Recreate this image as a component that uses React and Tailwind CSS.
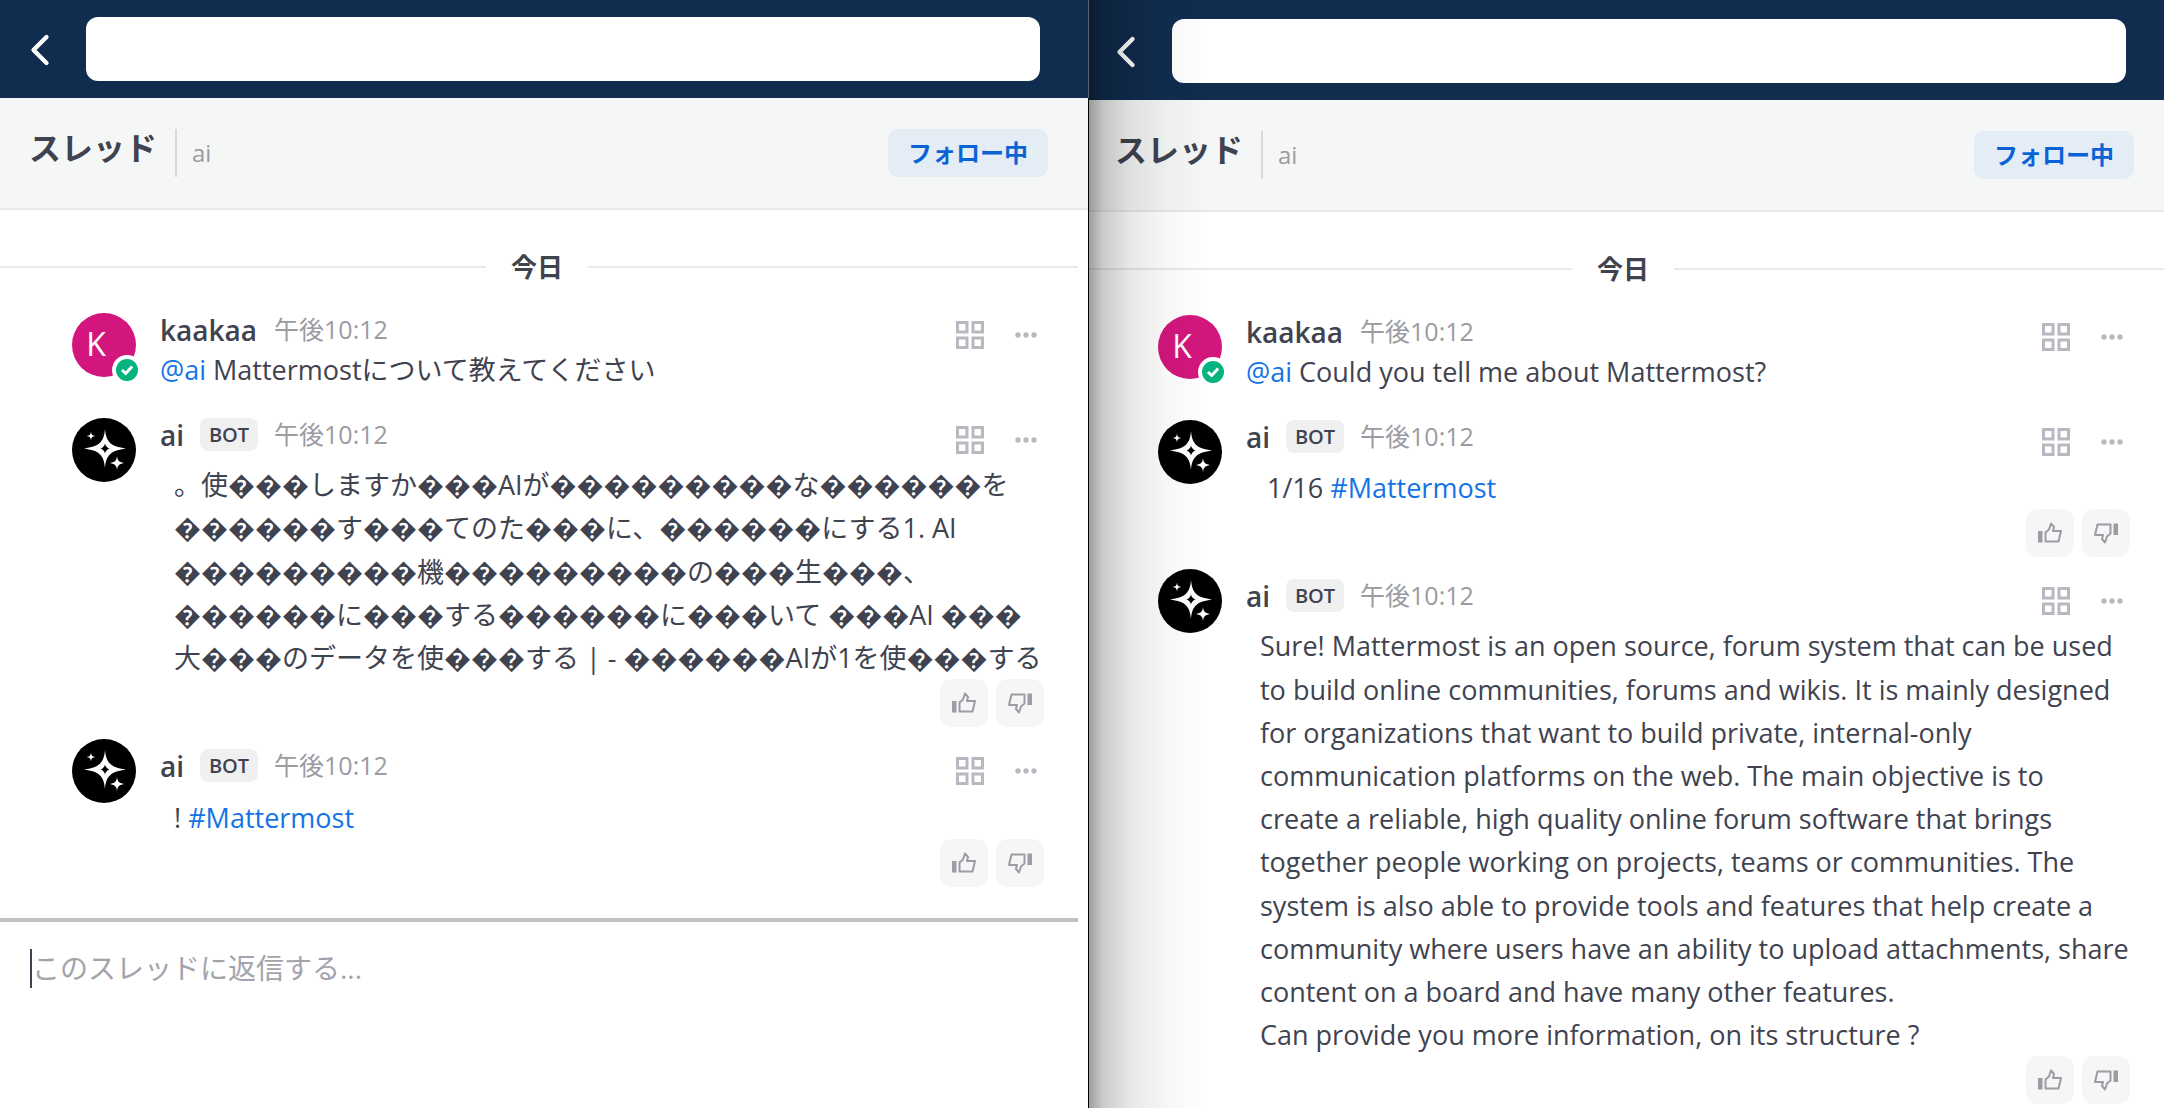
import React from "react";
import { ChevronLeft } from "lucide-react";

const textFont = "font-['Open_Sans','Noto_Sans_CJK_JP',sans-serif]";

const GridIcon = () => (
  <svg width="28" height="28" viewBox="0 0 28 28" fill="none" stroke="#b8b9c0" strokeWidth="3">
    <rect x="1.5" y="1.5" width="9.5" height="9.5" />
    <rect x="17" y="1.5" width="9.5" height="9.5" />
    <rect x="1.5" y="17" width="9.5" height="9.5" />
    <rect x="17" y="17" width="9.5" height="9.5" />
  </svg>
);

const DotsIcon = () => (
  <svg width="22" height="6" viewBox="0 0 22 6" fill="#b8b9c0">
    <circle cx="3" cy="3" r="2.7" />
    <circle cx="11" cy="3" r="2.7" />
    <circle cx="19" cy="3" r="2.7" />
  </svg>
);

const ThumbIcon = ({ down }) => (
  <svg width="24" height="24" viewBox="0 0 24 24" fill="none" className={down ? "rotate-180" : ""}>
    <rect x="0" y="10" width="4.5" height="11.5" fill="#9b9ca4" />
    <path d="M7.5 11.5 L11 8.5 L13 2.5 L16 6 L15 10 H23 L20.5 20.5 H7.5 Z" stroke="#9b9ca4" strokeWidth="2" strokeLinejoin="round" />
  </svg>
);

const Reactions = ({ className }) => (
  <div className={`flex justify-end gap-2 pr-[44px] ${className || ""}`}>
    <div className="w-12 h-12 rounded-xl bg-[#f5f7f7] flex items-center justify-center">
      <ThumbIcon />
    </div>
    <div className="w-12 h-12 rounded-xl bg-[#f5f7f7] flex items-center justify-center">
      <ThumbIcon down />
    </div>
  </div>
);

const BotAvatar = () => (
  <svg width="64" height="64" viewBox="0 0 64 64" className="shrink-0">
    <circle cx="32" cy="32" r="32" fill="#000" />
    <path fillRule="evenodd" fill="#fff" d="M33 11 C34 24 39 28.5 54 30.5 C39 32.5 34 37 33 50 C32 37 27 32.5 12 30.5 C27 28.5 32 24 33 11 Z M33 25.5 C32.5 28 31 29.5 28.5 30.5 C31 31.5 32.5 33 33 35.5 C33.5 33 35 31.5 37.5 30.5 C35 29.5 33.5 28 33 25.5 Z" />
    <path fill="#fff" d="M19 13.5 C19.4 16.5 20 17.5 23.5 18 C20 18.5 19.4 19.5 19 22.5 C18.6 19.5 18 18.5 14.5 18 C18 17.5 18.6 16.5 19 13.5 Z" />
    <path fill="#fff" d="M45 38 C45.5 42 46.5 44 52 45 C46.5 46 45.5 48 45 52 C44.5 48 43.5 46 38 45 C43.5 44 44.5 42 45 38 Z" />
  </svg>
);

const UserAvatar = () => (
  <div className="relative w-16 h-16 shrink-0 rounded-full bg-[#d3167d] flex items-center justify-center text-white text-[32px] pr-[16px] pb-[3px]">
    K
    <div className="absolute left-[44px] top-[46px] w-[22px] h-[22px] rounded-full bg-[#06b37f] ring-4 ring-white flex items-center justify-center">
      <svg width="14" height="12" viewBox="0 0 16 14" fill="none" stroke="#fff" strokeWidth="3.4">
        <path d="M2 7 L6.5 11 L14 3" />
      </svg>
    </div>
  </div>
);

const PostHeader = ({ name, bot, className }) => (
  <div className={`flex items-center h-9 pr-[51px] ${className || ""}`}>
    <div className="flex items-center pb-[3px]">
      <span className="text-[28px] font-semibold text-[#3f4350] leading-9">{name}</span>
      {bot && (
        <span className="ml-4 h-[33px] w-[58px] rounded-lg bg-[#f0f0f1] flex items-center justify-center text-[20px] font-semibold text-[#3f4350]">
          BOT
        </span>
      )}
      <span className={`${bot ? "ml-4" : "ml-[17px]"} text-[25px] text-[#9a9ba3]`}>午後10:12</span>
    </div>
    <div className="ml-auto flex items-center gap-[31px] pt-[8px]">
      <GridIcon />
      <DotsIcon />
    </div>
  </div>
);

const Mention = ({ children }) => <span className="text-[#1474e6]">{children}</span>;

const Panel = ({ reply, children }) => (
  <div className={`w-[1088px] h-[1108px] flex flex-col overflow-hidden bg-white ${textFont}`}>
    <div className="h-[98px] shrink-0 bg-[#102c4e] flex items-center">
      <ChevronLeft size={52} strokeWidth={2} className="text-white ml-[14px] mt-[2px]" />
      <div className="ml-[20px] w-[954px] h-16 bg-white rounded-xl" />
    </div>
    <div className="h-[112px] shrink-0 bg-[#f5f7f7] border-b-2 border-[#e8e9ea] flex items-center pl-[29px] pr-[40px]">
      <span className="text-[32px] font-semibold text-[#3f4350] mb-[11px]">スレッド</span>
      <div className="ml-[18px] w-[2px] h-12 bg-[#d8d9dc]" />
      <span className="ml-[15px] text-[24px] text-[#9a9ba3]">ai</span>
      <div className="ml-auto w-[160px] h-12 rounded-[10px] bg-[#e4ecf6] flex items-center justify-center text-[24px] font-semibold text-[#0a63d6]">
        フォロー中
      </div>
    </div>
    <div className="flex items-center mt-[39px] h-9 pr-[10px]">
      <div className="h-[2px] w-[486px] bg-[#e8e9ea]" />
      <span className="w-[102px] text-center text-[26px] font-semibold text-[#3f4350]">今日</span>
      <div className="h-[2px] flex-1 bg-[#e8e9ea]" />
    </div>
    <div className="mt-[28px] flex-1 pl-[72px]">{children}</div>
    {reply && (
      <div className="h-[190px] shrink-0">
        <div className="h-1 w-[1078px] bg-[#c1c1c7]" />
        <div className="mt-[27px] ml-[30px] flex items-center h-[39px] text-[28px] text-[#a3a4ab]">
          <span className="w-[2px] h-[39px] bg-[#3f4350]" />
          <span className="-mt-[2px]">このスレッドに返信する...</span>
        </div>
      </div>
    )}
  </div>
);

const Post = ({ name, bot, avatar, className, headerClass, bodyClass, reactions, children }) => (
  <div className={`flex gap-[24px] ${className || ""}`}>
    {avatar}
    <div className="flex-1 min-w-0">
      <PostHeader name={name} bot={bot} className={headerClass} />
      <div className={`text-[27px] leading-[43.2px] text-[#3f4350] ${bodyClass || ""}`}>{children}</div>
      {reactions && <Reactions />}
    </div>
  </div>
);

const App = () => (
  <div className="flex w-[2164px] h-[1108px] overflow-hidden bg-white">
    <Panel reply>
      <Post name="kaakaa" avatar={<UserAvatar />} bodyClass="-mt-[1px]">
        <Mention>@ai</Mention> Mattermostについて教えてください
      </Post>
      <Post name="ai" bot avatar={<BotAvatar />} className="mt-[27px]" bodyClass="mt-[9px] pl-[14px]" reactions>
        。使���しますか���AIが���������な������を<br />
        ������す���てのた���に、������にする1. AI<br />
        ���������機���������の���生���、<br />
        ������に���する������に���いて ���AI ���<br />
        大���のデータを使���する | - ������AIが1を使���する
      </Post>
      <Post name="ai" bot avatar={<BotAvatar />} className="mt-[12px]" headerClass="mt-[10px]" bodyClass="mt-[11px] pl-[14px]" reactions>
        ! <Mention>#Mattermost</Mention>
      </Post>
    </Panel>
    <div className="w-px shrink-0 bg-black">
      <div className="h-[98px] bg-[#56647a]" />
    </div>
    <div className="relative flex-1 overflow-hidden">
      <div className="h-[2px] bg-[#102c4e]" />
      <div className="-ml-[3px]">
        <Panel>
          <Post name="kaakaa" avatar={<UserAvatar />} bodyClass="-mt-[1px]">
            <Mention>@ai</Mention> Could you tell me about Mattermost?
          </Post>
          <Post name="ai" bot avatar={<BotAvatar />} className="mt-[27px]" bodyClass="mt-[10px] pl-[21px]" reactions>
            1/16 <Mention>#Mattermost</Mention>
          </Post>
          <Post name="ai" bot avatar={<BotAvatar />} className="mt-[12px]" headerClass="mt-[10px]" bodyClass="mt-[9px] pl-[14px]" reactions>
            Sure! Mattermost is an open source, forum system that can be used<br />
            to build online communities, forums and wikis. It is mainly designed<br />
            for organizations that want to build private, internal-only<br />
            communication platforms on the web. The main objective is to<br />
            create a reliable, high quality online forum software that brings<br />
            together people working on projects, teams or communities. The<br />
            system is also able to provide tools and features that help create a<br />
            community where users have an ability to upload attachments, share<br />
            content on a board and have many other features.<br />
            Can provide you more information, on its structure ?
          </Post>
        </Panel>
      </div>
      {/* shadow cast by the left panel */}
      <div className="absolute inset-y-0 left-0 w-[120px] pointer-events-none bg-[linear-gradient(to_right,rgba(0,0,0,0.38)_0%,rgba(0,0,0,0.2)_12%,rgba(0,0,0,0.09)_35%,rgba(0,0,0,0.03)_65%,rgba(0,0,0,0)_100%)]" />
    </div>
  </div>
);

export default App;
